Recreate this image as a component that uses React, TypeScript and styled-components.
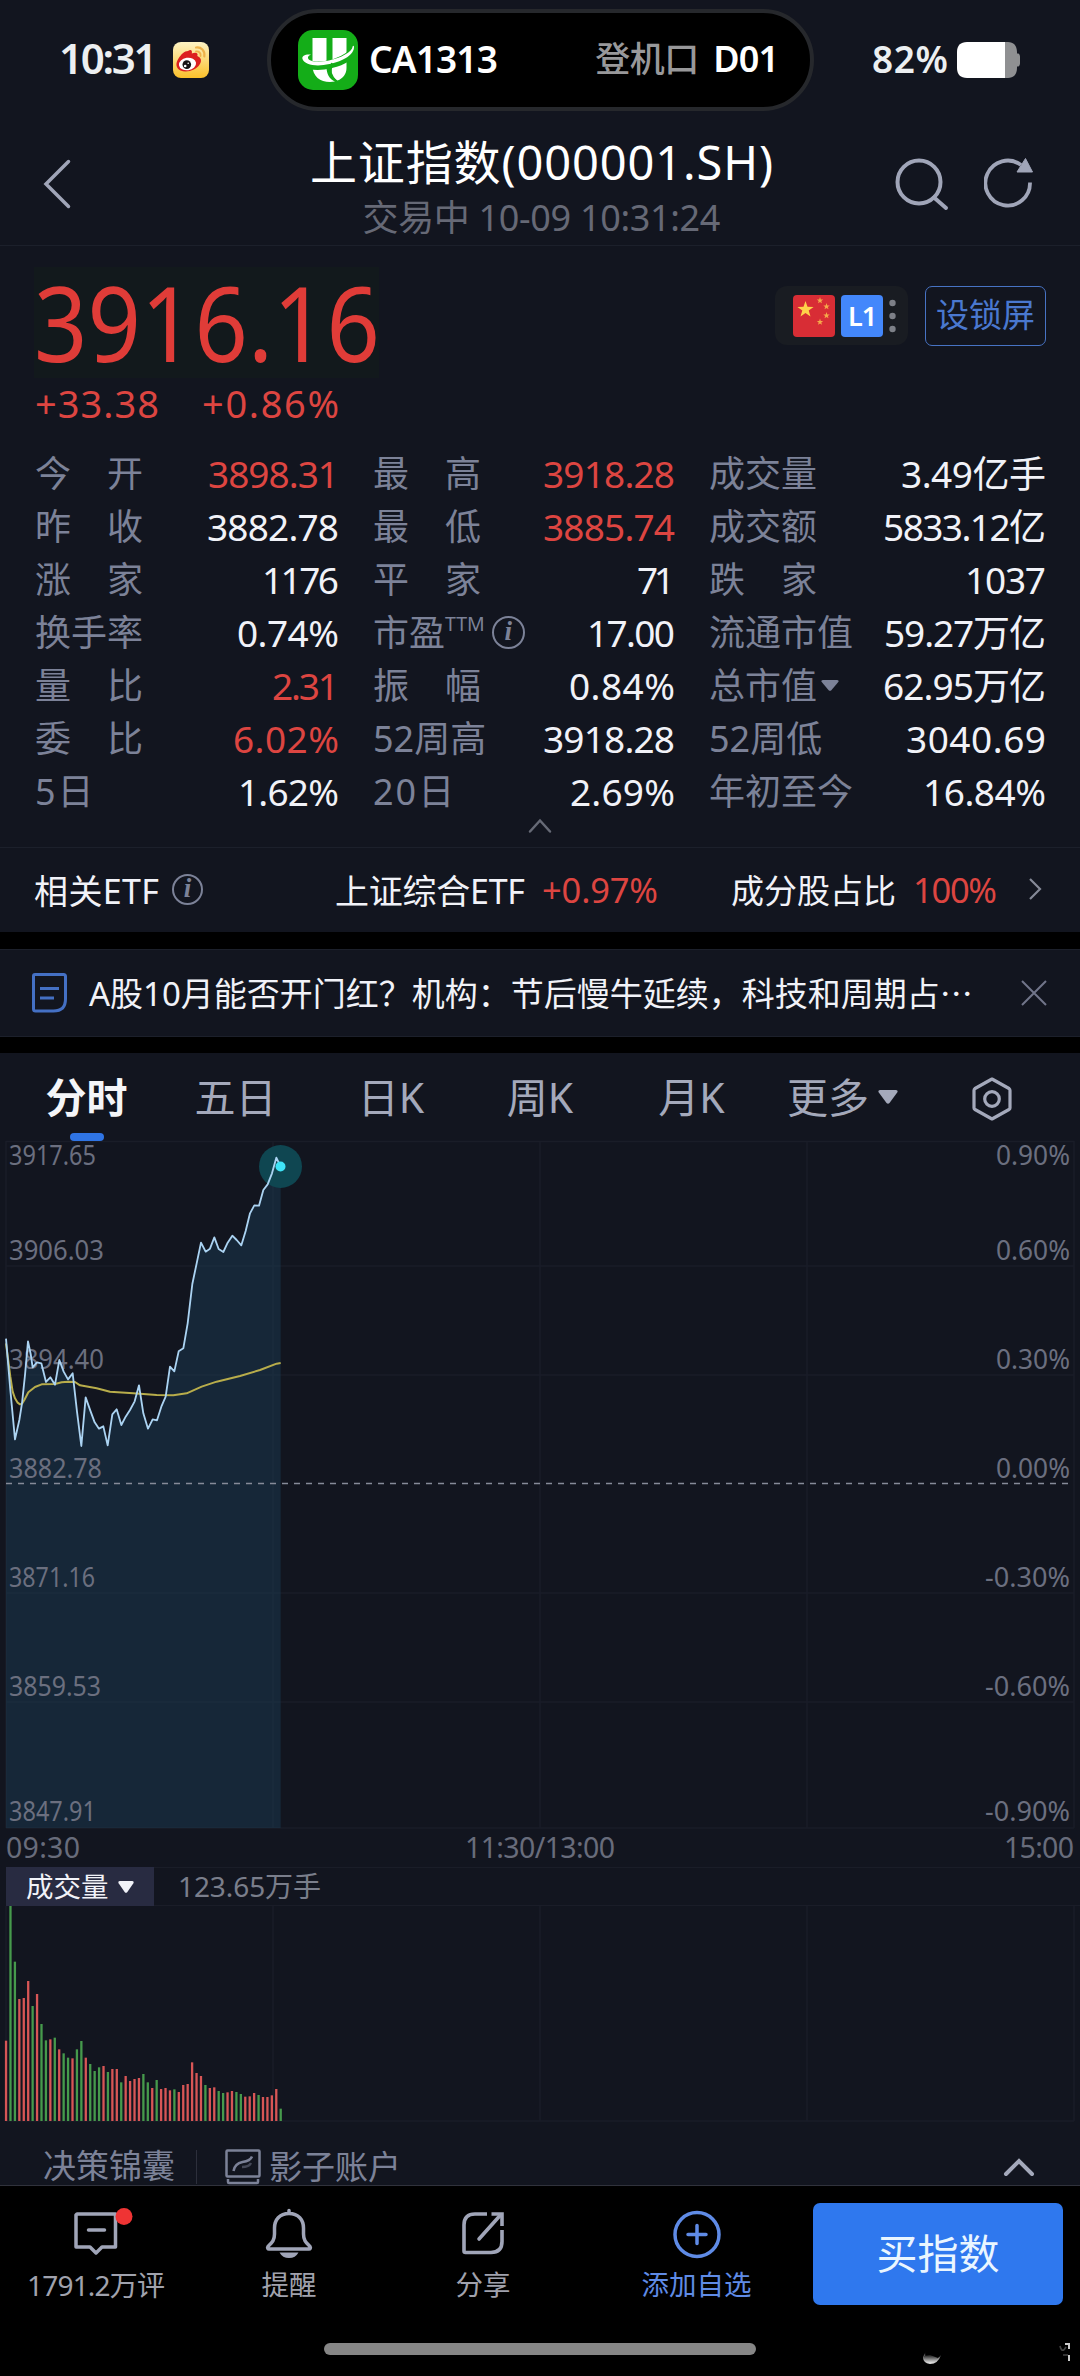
import React from "react";
import styled, { createGlobalStyle } from "styled-components";

const color = {
  bg: "#12151f",
  black: "#000000",
  line: "#1c202b",
  grid: "#1a1d28",
  label: "#7c8298",
  muted: "#666976",
  text: "#f1f2f8",
  tab: "#a4a9bb",
  icon: "#a0a5b8",
  red: "#dd4541",
  green: "#469a4c",
  blue: "#2f78ee",
};

const Global = createGlobalStyle`
  * { box-sizing: border-box; }
  body { margin: 0; background: ${color.bg}; }
`;

const Screen = styled.div`
  width: 1080px;
  height: 2376px;
  display: flex;
  flex-direction: column;
  overflow: hidden;
  background: ${color.bg};
  color: ${color.text};
  font-family: "Noto Sans", "Noto Sans CJK SC", sans-serif;
`;

/* ---------- text fitted to a column width ---------- */

const ADVANCE: Record<string, number> = {
  ".": 0.268, ":": 0.268, "%": 0.831, "+": 0.572, "-": 0.322, "(": 0.3, ")": 0.3,
  A: 0.639, C: 0.632, D: 0.73, E: 0.556, F: 0.519, H: 0.741, K: 0.619, L: 0.521,
  M: 0.907, S: 0.549, T: 0.556, "/": 0.372, " ": 0.26,
};

const advance = (ch: string) =>
  /[0-9]/.test(ch) ? 0.572 : ADVANCE[ch] ?? 1;

const FigureText = styled.span<{ $size: number; $color?: string; $weight?: number; $squeeze?: number }>`
  ${(p) => p.$squeeze && `display: inline-block; transform: scaleX(${p.$squeeze}); transform-origin: 0 50%;`}
  font-size: ${(p) => p.$size}px;
  font-weight: ${(p) => p.$weight ?? 400};
  color: ${(p) => p.$color ?? "inherit"};
  white-space: pre;
  font-kerning: none;
`;

type FigureProps = { size: number; w: number; tone?: string; weight?: number; squeeze?: number; children: string };

function Figure({ size, w, tone, weight, squeeze, children }: FigureProps) {
  const chars = [...children];
  const boldness = weight && weight > 500 ? 1.035 : 1;
  const natural = chars.reduce((sum, ch) => sum + advance(ch) * (advance(ch) === 1 ? 1 : boldness), 0) * size;
  const target = w / (squeeze ?? 1);
  const spacing = chars.length > 1 ? (target - natural) / (chars.length - 1) : 0;
  return (
    <FigureText
      $size={size}
      $color={tone}
      $weight={weight}
      $squeeze={squeeze}
      style={{ letterSpacing: `${spacing.toFixed(2)}px`, marginRight: `${(-spacing).toFixed(2)}px` }}
    >
      {children}
    </FigureText>
  );
}

/* ---------- status bar ---------- */

const StatusBar = styled.header`
  height: 111px;
  padding: 9px 60px 0 59px;
  display: grid;
  grid-template-columns: 208px 547px 1fr;
  align-items: center;
  line-height: 56px;
  flex: none;
`;

const Clock = styled.div`
  display: flex;
  align-items: center;
  gap: 15px;
  color: #eceff1;

  > span { margin-top: -4px; }
`;

const Island = styled.div`
  height: 102px;
  border: 4px solid #26282c;
  border-radius: 51px;
  background: ${color.black};
  display: flex;
  align-items: center;
  padding: 0 31px 0 27px;
  color: #fff;
`;

const Flight = styled.div`
  display: flex;
  align-items: center;
  gap: 11px;
  flex: 1;

  > span { margin-top: -3px; }
`;

const Gate = styled.div`
  display: flex;
  align-items: center;
  gap: 14px;

  > span { margin-top: -3px; }
`;

const BatteryBox = styled.div`
  display: flex;
  align-items: center;
  justify-content: flex-end;
  gap: 9px;
  color: #eceff1;

  > span { margin-top: -3px; }
`;

const WeiboIcon = () => (
  <svg width="36" height="36" viewBox="0 0 36 36">
    <defs>
      <linearGradient id="wb" x1="0" y1="0" x2="0" y2="1">
        <stop offset="0" stopColor="#fdf3c4" />
        <stop offset="1" stopColor="#fbc02a" />
      </linearGradient>
    </defs>
    <rect width="36" height="36" rx="8" fill="url(#wb)" />
    <path d="M23 5.500c5-.8 9.300 3 8.300 9" fill="none" stroke="#eeb24a" strokeWidth="2.200" strokeLinecap="round" />
    <path d="M23 9.500c3-.3 5 1.500 4.600 4.500" fill="none" stroke="#eeb24a" strokeWidth="1.800" strokeLinecap="round" />
    <path d="M15 9c3-2 4.500-.5 3.800 2.500 3.500-1.600 6.800-1 5.500 2.500 4 1.500 4.700 5 2.300 8.500C23.500 28 14 31 7.500 28.500 2.500 26 2.500 21 5.500 16.500 8 12.500 11.500 9 15 9z" fill="#dc1f20" />
    <ellipse cx="14.500" cy="22" rx="8.600" ry="6.300" fill="#fff" transform="rotate(-8 14.500 22)" />
    <circle cx="13.800" cy="22.600" r="4.300" fill="#151314" />
    <circle cx="12.200" cy="24" r="1.300" fill="#fff" />
    <circle cx="15.200" cy="21.200" r=".8" fill="#fff" />
  </svg>
);

const FlightIcon = () => (
  <svg width="60" height="60" viewBox="0 0 60 60">
    <rect width="60" height="60" rx="15" fill="#14ad18" />
    <path d="M14.500 8h14v29c0 7 3 12 8.500 14.500-12 2-22.500-3-22.500-16z" fill="#fff" />
    <path d="M34.500 8h14v30c0 6-3.500 10.500-9 12.500-6-3-7.500-8.500-5-13.500z" fill="#fff" />
    <path d="M5 26c-3 9 12 12 28 8 12-3 22-9 22-15" fill="none" stroke="#14ad18" strokeWidth="8.500" />
    <path d="M13 24.500C7 24 3.500 26 4.500 29c2 6 14 8 27 5 14-3 25-9.500 24.500-17.500-.2-1-1.400-1-1.400.3C54 22 43 28 31 30.500c-10 2-20 1.500-21-2.500-.3-1.400 1-2.800 3-3.500z" fill="#fff" />
    <path d="M34 33c-2.500 6-1.500 13 4.500 18.500" fill="none" stroke="#14ad18" strokeWidth="1.800" />
  </svg>
);

const BatteryIcon = () => (
  <svg width="63" height="36" viewBox="0 0 63 36">
    <path d="M48 0h3c5.500 0 9 3.500 9 10v1.500h1.500q1.500 1 1.500 3v7q0 2-1.500 3H60V26c0 6.500-3.500 10-9 10h-3z" fill="#8f9092" />
    <path d="M10 0h38v36H10C3.500 36 0 32.500 0 26V10C0 3.500 3.500 0 10 0z" fill="#fff" />
  </svg>
);

/* ---------- title bar ---------- */

const TitleBar = styled.div`
  height: 135px;
  padding: 0 46px 0 43px;
  display: grid;
  grid-template-columns: 200px 1fr 194px;
  border-bottom: 1px solid ${color.line};
  flex: none;
`;

const TitleText = styled.div`
  display: flex;
  flex-direction: column;
  align-items: center;
  padding-top: 19px;
  color: #fff;
`;

const TitleLine = styled.div<{ $h: number }>`
  height: ${(p) => p.$h}px;
  line-height: ${(p) => p.$h}px;
`;

const TitleIcons = styled.div<{ $end?: boolean }>`
  display: flex;
  align-items: center;
  gap: 34px;
  justify-content: ${(p) => (p.$end ? "flex-end" : "flex-start")};
  padding-top: 12px;
`;

/* ---------- quote ---------- */

const QuoteHead = styled.section`
  height: 201px;
  padding: 21px 34px 0 34px;
  display: flex;
  justify-content: space-between;
  flex: none;
`;

const PriceBox = styled.div`
  width: 345px;
  height: 111px;
  line-height: 109px;
  background: #12191c;
`;

const ChangeRow = styled.div`
  height: 52px;
  line-height: 50px;
  display: flex;
  gap: 43px;
  padding-left: 1px;
`;

const Badges = styled.div`
  display: flex;
  gap: 17px;
  padding-top: 19px;
`;

const LevelPill = styled.div`
  width: 133px;
  height: 59px;
  border-radius: 12px;
  background: #191c22;
  display: flex;
  align-items: center;
  gap: 6px;
  padding-left: 18px;
`;

const LevelTag = styled.div`
  width: 42px;
  height: 42px;
  border-radius: 4px;
  background: #4387fb;
  color: #fff;
  font-size: 27px;
  font-weight: 600;
  line-height: 41px;
  text-align: center;
  letter-spacing: -1px;
`;

const LockButton = styled.div`
  width: 121px;
  height: 60px;
  border: 1.500px solid #4773c4;
  border-radius: 7px;
  color: #4a78cf;
  font-size: 33px;
  line-height: 56px;
  text-align: center;
  white-space: nowrap;
`;

const Stats = styled.section`
  height: 371px;
  padding: 0 34px 0 35px;
  display: grid;
  grid-template-columns: 304px 302px 337px;
  column-gap: 34px;
  grid-auto-rows: 53px;
  flex: none;
`;

const Stat = styled.div`
  display: flex;
  align-items: center;
  justify-content: space-between;
  line-height: 53px;
`;

const StatLabel = styled.div<{ $spread?: boolean; $loose?: boolean }>`
  display: flex;
  align-items: center;
  font-size: 36px;
  letter-spacing: ${(p) => (p.$loose ? "2px" : "0")};
  color: ${color.label};
  width: ${(p) => (p.$spread ? "108px" : "auto")};
  justify-content: ${(p) => (p.$spread ? "space-between" : "flex-start")};
  white-space: nowrap;
`;

const Sup = styled.span`
  font-size: 19.500px;
  line-height: 20px;
  align-self: flex-start;
  padding-top: 8px;
  margin-right: 7px;
`;

const MenuMark = styled.span`
  display: flex;
  margin-left: 4px;
`;

const InfoMark = styled.span<{ $d: number }>`
  width: ${(p) => p.$d}px;
  height: ${(p) => p.$d}px;
  border: 2.500px solid ${color.label};
  border-radius: 50%;
  color: ${color.label};
  font: italic bold 27px "Liberation Serif", serif;
  line-height: ${(p) => p.$d - 6}px;
  text-align: center;
`;

const Fold = styled.div`
  height: 30px;
  display: flex;
  justify-content: center;
  border-bottom: 1px solid ${color.line};
  flex: none;
`;

/* ---------- ETF row and headline ---------- */

const EtfRow = styled.section`
  height: 84px;
  padding: 0 38px 2px 34px;
  display: flex;
  align-items: center;
  flex: none;
`;

const EtfPart = styled.div<{ $w?: number; $gap: number }>`
  width: ${(p) => (p.$w ? `${p.$w}px` : "auto")};
  display: flex;
  align-items: center;
  gap: ${(p) => p.$gap}px;
`;

const Divider = styled.div<{ $h: number }>`
  height: ${(p) => p.$h}px;
  background: ${color.black};
  flex: none;
`;

const Headline = styled.section`
  height: 88px;
  padding: 0 32px;
  border-top: 1px solid ${color.line};
  border-bottom: 1px solid ${color.line};
  display: flex;
  align-items: center;
  flex: none;
`;

const HeadlineText = styled.div`
  flex: 1;
  padding-left: 21px;
  font-size: 33px;
  line-height: 50px;
  white-space: nowrap;
`;

const Dots = styled.span`
  font-family: "Noto Sans CJK SC", sans-serif;
`;

/* ---------- tabs ---------- */

const Tabs = styled.nav`
  height: 88px;
  padding-left: 12px;
  display: grid;
  grid-template-columns: 149px 149px 162px 136px 167px 135px 164px;
  flex: none;
`;

const Tab = styled.div<{ $active?: boolean; $icon?: boolean }>`
  position: relative;
  display: flex;
  align-items: center;
  justify-content: center;
  gap: 9px;
  padding-top: ${(p) => (p.$icon ? 4 : 0)}px;
  font-size: 41px;
  line-height: 56px;
  font-weight: ${(p) => (p.$active ? 700 : 400)};
  color: ${(p) => (p.$active ? "#f4f5f8" : color.tab)};
  white-space: nowrap;

  &::after {
    content: "";
    display: ${(p) => (p.$active ? "block" : "none")};
    position: absolute;
    left: 58px;
    bottom: 0;
    width: 34px;
    height: 8px;
    border-radius: 4px;
    background: #2f74e4;
  }
`;

/* ---------- charts ---------- */

const PlotSvg = styled.svg`
  display: block;
  flex: none;
  overflow: visible;
`;

const TimeAxis = styled.div`
  height: 38px;
  padding: 0 6px;
  display: grid;
  grid-template-columns: 1fr 1fr 1fr;
  line-height: 36px;
  color: #686c7b;
  flex: none;

  > :nth-child(2) { justify-self: center; }
  > :nth-child(3) { justify-self: end; }
`;

const VolumeHead = styled.div`
  height: 39px;
  margin-left: 6px;
  display: flex;
  gap: 24px;
  border-top: 1px solid ${color.grid};
  border-bottom: 1px solid ${color.grid};
  line-height: 37px;
  flex: none;
`;

const VolumeChip = styled.div`
  width: 148px;
  height: 39px;
  margin-top: -1px;
  padding-left: 20px;
  background: #282b41;
  display: flex;
  align-items: center;
  gap: 9px;
  font-size: 27.500px;
`;

const PRICE_LABELS: [string, string, number, number][] = [
  ["3917.65", "0.90%", 15, 87],
  ["3906.03", "0.60%", 110, 95],
  ["3894.40", "0.30%", 219, 95],
  ["3882.78", "0.00%", 328, 93],
  ["3871.16", "-0.30%", 437, 86],
  ["3859.53", "-0.60%", 546, 92],
  ["3847.91", "-0.90%", 671, 87],
];

/* curves are plotted on a grid three times finer than the pixel grid */
const PRICE =
  "18,626 31,780 45,928 58,870 66,820 75,735 84,634 92,672 98,712 111,697 124,700 138,756 151,742 165,764 178,690 191,725 204,748 218,730 231,845 244,948 257,802 271,842 284,877 297,896 310,889 323,946 337,853 350,838 364,885 377,860 390,840 404,814 417,766 430,850 444,896 458,868 471,871 484,830 497,800 510,710 523,724 536,664 550,655 563,580 577,462 590,400 603,338 617,365 630,356 643,322 656,357 670,366 683,338 697,317 710,330 724,346 737,303 750,250 763,226 777,227 790,180 803,163 816,130 829,83 842,110";
const AVERAGE =
  "18,640 31,740 38,785 45,805 53,818 60,823 67,820 73,810 85,787 105,771 125,763 165,762 185,757 205,755 225,756 240,766 290,775 330,785 400,790 470,795 520,796 560,790 605,770 650,755 720,738 780,720 830,701 842,699";

const BARS: [number, string][] = (
  "r241 g645 g478 r366 r369 r420 g345 r381 g291 g242 r245 g250 r215 g203 g190 r188 g215 g240 r190 g171 g150 g161 r165 g147 r156 r156 g116 r135 r120 r126 r129 g141 g116 r99 g123 r96 r99 r92 g95 r87 r108 r111 r176 r144 r135 g108 r99 r101 g90 g84 r86 r90 g87 g81 r73 r74 r84 g78 r72 r72 r77 r96 g37"
)
  .split(" ")
  .map((s) => [Number(s.slice(1)) / 3, s[0]]);

const GRID_X = [6, 273, 540, 807, 1074];

function PriceChart() {
  return (
    <PlotSvg width="1080" height="688" viewBox="0 0 1080 688">
      {GRID_X.map((x) => (
        <line key={x} x1={x} x2={x} y1="0" y2="687" stroke={color.grid} strokeWidth="1.500" />
      ))}
      {[0.5, 125, 234, 452, 561, 687].map((y) => (
        <line key={y} x1="6" x2="1074" y1={y} y2={y} stroke={color.grid} strokeWidth="1.500" />
      ))}
      <g transform="translate(0 -11) scale(.33333)">
        <polygon points={`18,2094 ${PRICE} 842,2094`} fill="#1c3d54" fillOpacity=".48" />
      </g>
      <g fontSize="26.500" fill="#6b6f7f">
        {PRICE_LABELS.map(([price, pct, y, w]) => (
          <React.Fragment key={price}>
            <text x="9" y={y + 9} textLength={w} lengthAdjust="spacingAndGlyphs">{price}</text>
            <text x={pct.length > 5 ? 985 : 996} y={y + 9} textLength={pct.length > 5 ? 85 : 74} lengthAdjust="spacingAndGlyphs">{pct}</text>
          </React.Fragment>
        ))}
      </g>
      <line x1="6" x2="1074" y1="342.500" y2="342.500" stroke="#868b99" strokeWidth="1.500" strokeDasharray="6 6" />
      <circle cx="280.500" cy="25.500" r="21.500" fill="#0f4651" />
      <g transform="translate(0 -11) scale(.33333)" fill="none" strokeLinejoin="round">
        <polyline points={AVERAGE} stroke="#b8ad4b" strokeWidth="6" />
        <polyline points={PRICE} stroke="#abd3f2" strokeWidth="5.500" />
      </g>
      <circle cx="280.500" cy="25.500" r="5" fill="#3fe4f8" />
    </PlotSvg>
  );
}

function VolumeChart() {
  return (
    <PlotSvg width="1080" height="216" viewBox="0 0 1080 216">
      {GRID_X.map((x) => (
        <line key={x} x1={x} x2={x} y1="0" y2="215" stroke={color.grid} strokeWidth="1.500" />
      ))}
      <line x1="6" x2="1074" y1="215" y2="215" stroke={color.grid} strokeWidth="1.500" />
      {BARS.map(([h, tone], i) => (
        <rect
          key={i}
          x={4.9 + i * 4.43}
          y={215 - h}
          width="2.300"
          height={h}
          fill={tone === "r" ? "#d85656" : color.green}
        />
      ))}
    </PlotSvg>
  );
}

/* ---------- bottom area ---------- */

const ToolStrip = styled.div`
  height: 64px;
  padding: 24px 45px 0 43px;
  display: flex;
  align-items: flex-start;
  border-bottom: 1.500px solid #30323c;
  color: ${color.label};
  font-size: 33px;
  line-height: 40px;
  flex: none;
`;

const ToolName = styled.div`
  width: 153px;
  white-space: nowrap;
`;

const ToolEntry = styled.div`
  flex: 1;
  height: 34px;
  margin-top: 4px;
  padding-left: 28px;
  border-left: 1px solid #2c2f3b;
  display: flex;
  align-items: center;
  gap: 8px;
`;

const ToolToggle = styled.div`
  padding-top: 11px;
  display: flex;
`;

const BottomBar = styled.footer`
  flex: 1;
  background: ${color.black};
  display: flex;
  flex-direction: column;
`;

const Actions = styled.div`
  height: 141px;
  display: grid;
  grid-template-columns: 192px 194px 194px 233px 250px;
`;

const Action = styled.div<{ $accent?: boolean }>`
  padding-top: 22px;
  display: flex;
  flex-direction: column;
  align-items: center;
  gap: 6px;
  color: ${(p) => (p.$accent ? "#5f8be6" : "#a0a2ad")};
  font-size: 27.500px;
  line-height: 38px;
  white-space: nowrap;
`;

const BuyButton = styled.div`
  height: 102px;
  margin-top: 17px;
  border-radius: 7px;
  background: ${color.blue};
  color: #eaf6ff;
  font-size: 41px;
  line-height: 101px;
  text-align: center;
`;

const HomeRow = styled.div`
  display: grid;
  grid-template-columns: 324px 432px 1fr;
  padding-top: 16px;
`;

const HomeIndicator = styled.div`
  grid-column: 2;
  height: 12px;
  border-radius: 6px;
  background: #868686;
`;

const Caret = ({ w, h, fill }: { w: number; h: number; fill: string }) => (
  <svg width={w} height={h} viewBox="0 0 20 14" preserveAspectRatio="none">
    <path d="M2 0h16q2.500.5 1.200 2.500L11.500 13q-1.500 1.500-3 0L.8 2.500Q-.5.5 2 0z" fill={fill} />
  </svg>
);

const star = (cx: number, cy: number, r: number) =>
  Array.from({ length: 10 }, (_, i) => {
    const radius = i % 2 ? r * 0.4 : r;
    const a = (Math.PI * i) / 5 - Math.PI / 2;
    return `${(cx + radius * Math.cos(a)).toFixed(1)},${(cy + radius * Math.sin(a)).toFixed(1)}`;
  }).join(" ");

type StatItem = { label: string; value: string; w: number; up?: boolean; ttm?: boolean; menu?: boolean };

const STATS: StatItem[] = [
  { label: "今开", value: "3898.31", w: 131, up: true },
  { label: "最高", value: "3918.28", w: 132, up: true },
  { label: "成交量", value: "3.49亿手", w: 145 },
  { label: "昨收", value: "3882.78", w: 132 },
  { label: "最低", value: "3885.74", w: 132, up: true },
  { label: "成交额", value: "5833.12亿", w: 163 },
  { label: "涨家", value: "1176", w: 77 },
  { label: "平家", value: "71", w: 38 },
  { label: "跌家", value: "1037", w: 81 },
  { label: "换手率", value: "0.74%", w: 102 },
  { label: "市盈", value: "17.00", w: 88, ttm: true },
  { label: "流通市值", value: "59.27万亿", w: 162 },
  { label: "量比", value: "2.31", w: 67, up: true },
  { label: "振幅", value: "0.84%", w: 106 },
  { label: "总市值", value: "62.95万亿", w: 163, menu: true },
  { label: "委比", value: "6.02%", w: 106, up: true },
  { label: "52周高", value: "3918.28", w: 132 },
  { label: "52周低", value: "3040.69", w: 140 },
  { label: "5日", value: "1.62%", w: 101 },
  { label: "20日", value: "2.69%", w: 105 },
  { label: "年初至今", value: "16.84%", w: 123 },
];

export default function App() {
  return (
    <Screen>
      <Global />
      <StatusBar>
        <Clock>
          <Figure size={42} w={102} weight={600}>10:31</Figure>
          <WeiboIcon />
        </Clock>
        <Island>
          <Flight>
            <FlightIcon />
            <Figure size={37} w={132} weight={600}>CA1313</Figure>
          </Flight>
          <Gate>
            <Figure size={35} w={104} weight={500} tone="#98989a">登机口</Figure>
            <Figure size={36} w={68} weight={600}>D01</Figure>
          </Gate>
        </Island>
        <BatteryBox>
          <Figure size={37} w={77} weight={600}>82%</Figure>
          <BatteryIcon />
        </BatteryBox>
      </StatusBar>

      <TitleBar>
        <TitleIcons>
          <svg width="30" height="50" viewBox="0 0 30 50" fill="none" stroke={color.icon} strokeWidth="3.500" strokeLinecap="round">
            <path d="M25.500 2.500 3 25l22.500 22.500" />
          </svg>
        </TitleIcons>
        <TitleText>
          <TitleLine $h={65}>
            <Figure size={47} w={463}>上证指数(000001.SH)</Figure>
          </TitleLine>
          <TitleLine $h={46}>
            <Figure size={36} w={358} tone={color.muted}>交易中 10-09 10:31:24</Figure>
          </TitleLine>
        </TitleText>
        <TitleIcons $end>
          <svg width="56" height="54" viewBox="0 0 56 54" fill="none" stroke={color.icon} strokeWidth="4">
            <circle cx="25" cy="25" r="21.500" />
            <path d="M40 40.500 52 51" strokeLinecap="round" />
          </svg>
          <svg width="50" height="54" viewBox="0 0 50 54">
            <path d="M46 25.500A22.300 22.500 0 1 1 37 8" fill="none" stroke={color.icon} strokeWidth="3.800" />
            <path d="M41.500 1.500 48.500 15H33z" fill={color.icon} stroke={color.icon} strokeLinejoin="round" />
          </svg>
        </TitleIcons>
      </TitleBar>

      <QuoteHead>
        <div>
          <PriceBox>
            <Figure size={105} w={346} squeeze={0.89} tone="#e03c38">3916.16</Figure>
          </PriceBox>
          <ChangeRow>
            <Figure size={38} w={124} tone={color.red}>+33.38</Figure>
            <Figure size={38} w={137} tone={color.red}>+0.86%</Figure>
          </ChangeRow>
        </div>
        <Badges>
          <LevelPill>
            <svg width="42" height="42" viewBox="0 0 42 42">
              <rect width="42" height="42" rx="4" fill="#d82d35" />
              <polygon points={star(12.5, 14.5, 8.5)} fill="#ffd24a" />
              {[[27, 5.5], [33.5, 11.5], [33.5, 20.5], [27, 27]].map(([x, y]) => (
                <polygon key={y} points={star(x, y, 3.4)} fill="#f5a94a" />
              ))}
            </svg>
            <LevelTag>L1</LevelTag>
            <svg width="8" height="34" viewBox="0 0 8 34" fill="#7d8088">
              <circle cx="3.500" cy="4" r="3.200" />
              <circle cx="3.500" cy="17" r="3.200" />
              <circle cx="3.500" cy="30" r="3.200" />
            </svg>
          </LevelPill>
          <LockButton>设锁屏</LockButton>
        </Badges>
      </QuoteHead>

      <Stats>
        {STATS.map(({ label, value, w, up, ttm, menu }) => {
          const days = label.endsWith("日");
          const spread = label.length === 2 && !ttm && !days;
          return (
            <Stat key={label}>
              <StatLabel $spread={spread} $loose={days}>
                {spread ? [...label].map((ch) => <span key={ch}>{ch}</span>) : label}
                {ttm && <Sup>TTM</Sup>}
                {ttm && <InfoMark $d={33}>i</InfoMark>}
                {menu && <MenuMark><Caret w={18} h={11} fill={color.label} /></MenuMark>}
              </StatLabel>
              <Figure size={37} w={w} tone={up ? color.red : color.text}>{value}</Figure>
            </Stat>
          );
        })}
      </Stats>
      <Fold>
        <svg width="24" height="16" viewBox="0 0 24 16" fill="none" stroke="#666a76" strokeWidth="2.500" strokeLinecap="round">
          <path d="M2 13.500 12 2.500l10 11" />
        </svg>
      </Fold>

      <EtfRow>
        <EtfPart $w={301} $gap={13}>
          <Figure size={34} w={125}>相关ETF</Figure>
          <InfoMark $d={31}>i</InfoMark>
        </EtfPart>
        <EtfPart $w={396} $gap={17}>
          <Figure size={34} w={190}>上证综合ETF</Figure>
          <Figure size={34.5} w={116} tone={color.red}>+0.97%</Figure>
        </EtfPart>
        <EtfPart $gap={17}>
          <Figure size={33} w={165}>成分股占比</Figure>
          <Figure size={34.5} w={84} tone={color.red}>100%</Figure>
        </EtfPart>
        <Spacer />
        <svg width="14" height="24" viewBox="0 0 14 24" fill="none" stroke="#858997" strokeWidth="2.200">
          <path d="m2 2 10 10L2 22" />
        </svg>
      </EtfRow>
      <Divider $h={17} />

      <Headline>
        <svg width="36" height="42" viewBox="0 0 36 42" fill="none" stroke="#4470c4" strokeWidth="3">
          <path d="M3 2.500h28.500q2 0 2 2V27q0 12-12 12H3.500q-2 0-2-2V4q0-1.500 1.500-1.500z" />
          <path d="M8 16.500h19M8 26h14" />
        </svg>
        <HeadlineText>
          A股10月能否开门红？机构：节后慢牛延续，科技和周期占<Dots>…</Dots>
        </HeadlineText>
        <svg width="28" height="28" viewBox="0 0 28 28" stroke="#71758a" strokeWidth="2">
          <path d="m2 2 24 24M26 2 2 26" />
        </svg>
      </Headline>
      <Divider $h={16} />

      <Tabs>
        <Tab $active>分时</Tab>
        <Tab>五日</Tab>
        <Tab>日K</Tab>
        <Tab>周K</Tab>
        <Tab>月K</Tab>
        <Tab>
          更多
          <Caret w={20} h={14} fill={color.tab} />
        </Tab>
        <Tab $icon>
          <svg width="40" height="44" viewBox="0 0 40 44" fill="none" stroke={color.tab} strokeWidth="3.200" strokeLinejoin="round">
            <path d="M20 2 37 11.500q1 .8 1 2V31q0 1-1 1.500L20 42 3 32.500Q2 32 2 31V13.500q0-1.200 1-2z" />
            <circle cx="20" cy="22" r="7.300" />
          </svg>
        </Tab>
      </Tabs>

      <PriceChart />
      <TimeAxis>
        <Figure size={28.5} w={74}>09:30</Figure>
        <Figure size={28.5} w={150}>11:30/13:00</Figure>
        <Figure size={28.5} w={70}>15:00</Figure>
      </TimeAxis>
      <VolumeHead>
        <VolumeChip>
          成交量
          <Caret w={16} h={12} fill={color.text} />
        </VolumeChip>
        <Figure size={28} w={143} tone="#7a7e8b">123.65万手</Figure>
      </VolumeHead>
      <VolumeChart />

      <ToolStrip>
        <ToolName>决策锦囊</ToolName>
        <ToolEntry>
          <svg width="36" height="36" viewBox="0 0 36 36" fill="none" stroke={color.label} strokeWidth="2.500">
            <rect x="1.500" y="1.500" width="33" height="26" rx="1" />
            <path d="M3 30v3q0 1 1 1h28q1 0 1-1v-3" />
            <path d="M8.500 22c1-6 4-8 9-9 5-.6 8-1.500 9.500-5.500" />
            <path d="M17 18c4.500 0 7.500-1 9-4" stroke="#454958" />
          </svg>
          影子账户
        </ToolEntry>
        <ToolToggle>
          <svg width="32" height="20" viewBox="0 0 32 20" fill="none" stroke={color.tab} strokeWidth="4" strokeLinecap="round">
            <path d="M3 17 16 4l13 13" />
          </svg>
        </ToolToggle>
      </ToolStrip>

      <BottomBar>
        <Actions>
          <Action>
            <svg width="74" height="52" viewBox="0 0 74 52" fill="none">
              <path d="M18 6h38.500v33H43l-6 6-6-6H17V7z" stroke={color.icon} strokeWidth="3.500" strokeLinejoin="round" />
              <path d="M29.500 22h16" stroke={color.icon} strokeWidth="3.500" strokeLinecap="round" />
              <circle cx="65" cy="8.500" r="8.500" fill="#ef3434" />
            </svg>
            <Figure size={28} w={138}>1791.2万评</Figure>
          </Action>
          <Action>
            <svg width="48" height="52" viewBox="0 0 48 52">
              <path d="M24 5.500C14.500 5.500 9.500 12 9.500 20v6c0 7-3 9-6.500 12.500-1 1.500 0 2.500 1 2.500h40c1 0 2-1 1-2.500C41.500 35 38.500 33 38.500 26v-6c0-8-5-14.500-14.500-14.500zM24 5V2.500" fill="none" stroke={color.icon} strokeWidth="3.500" strokeLinecap="round" />
              <path d="M14.500 44.500h19q-3 5.500-9.500 5.500t-9.500-5.500z" fill={color.icon} />
            </svg>
            提醒
          </Action>
          <Action>
            <svg width="46" height="52" viewBox="0 0 46 52" fill="none" stroke={color.icon} strokeWidth="3.600">
              <path d="M27 6H15Q4 6 4 17v26q0 1.500 1.500 1.500H31q11 0 11-11V22" />
              <path d="M19 31 40.500 7" strokeLinecap="round" />
              <path d="M31.500 6H42v12" />
            </svg>
            分享
          </Action>
          <Action $accent>
            <svg width="52" height="52" viewBox="0 0 52 52" fill="none" stroke="#5f8be6" strokeWidth="3.500">
              <circle cx="26" cy="26.500" r="22" />
              <path d="M26 17.500v18M17 26.500h18" strokeLinecap="round" />
            </svg>
            添加自选
          </Action>
          <BuyButton>买指数</BuyButton>
        </Actions>
        <HomeRow>
          <HomeIndicator />
          <svg width="324" height="30" viewBox="0 0 324 30">
            <defs>
              <linearGradient id="glint" x1="0" y1="0" x2="0" y2="1">
                <stop offset="0" stopColor="#1a1a1a" />
                <stop offset="1" stopColor="#e8e8e8" />
              </linearGradient>
            </defs>
            <path d="M170 8q-3 4 3 10 9-1 12-6-3 9-11 9-7-1-7-7z" fill="url(#glint)" />
            <path d="M167 13q2 7 7 7 5 0 8-5l-8-3z" fill="url(#glint)" />
            <path d="M304 3q2 8 6 1M307 12h5" stroke="#444" strokeWidth="1.600" fill="none" />
            <path d="M309 1h4v5M313 12v6" stroke="#ccc" strokeWidth="2" fill="none" />
          </svg>
        </HomeRow>
      </BottomBar>
    </Screen>
  );
}

const Spacer = styled.div`
  flex: 1;
`;
